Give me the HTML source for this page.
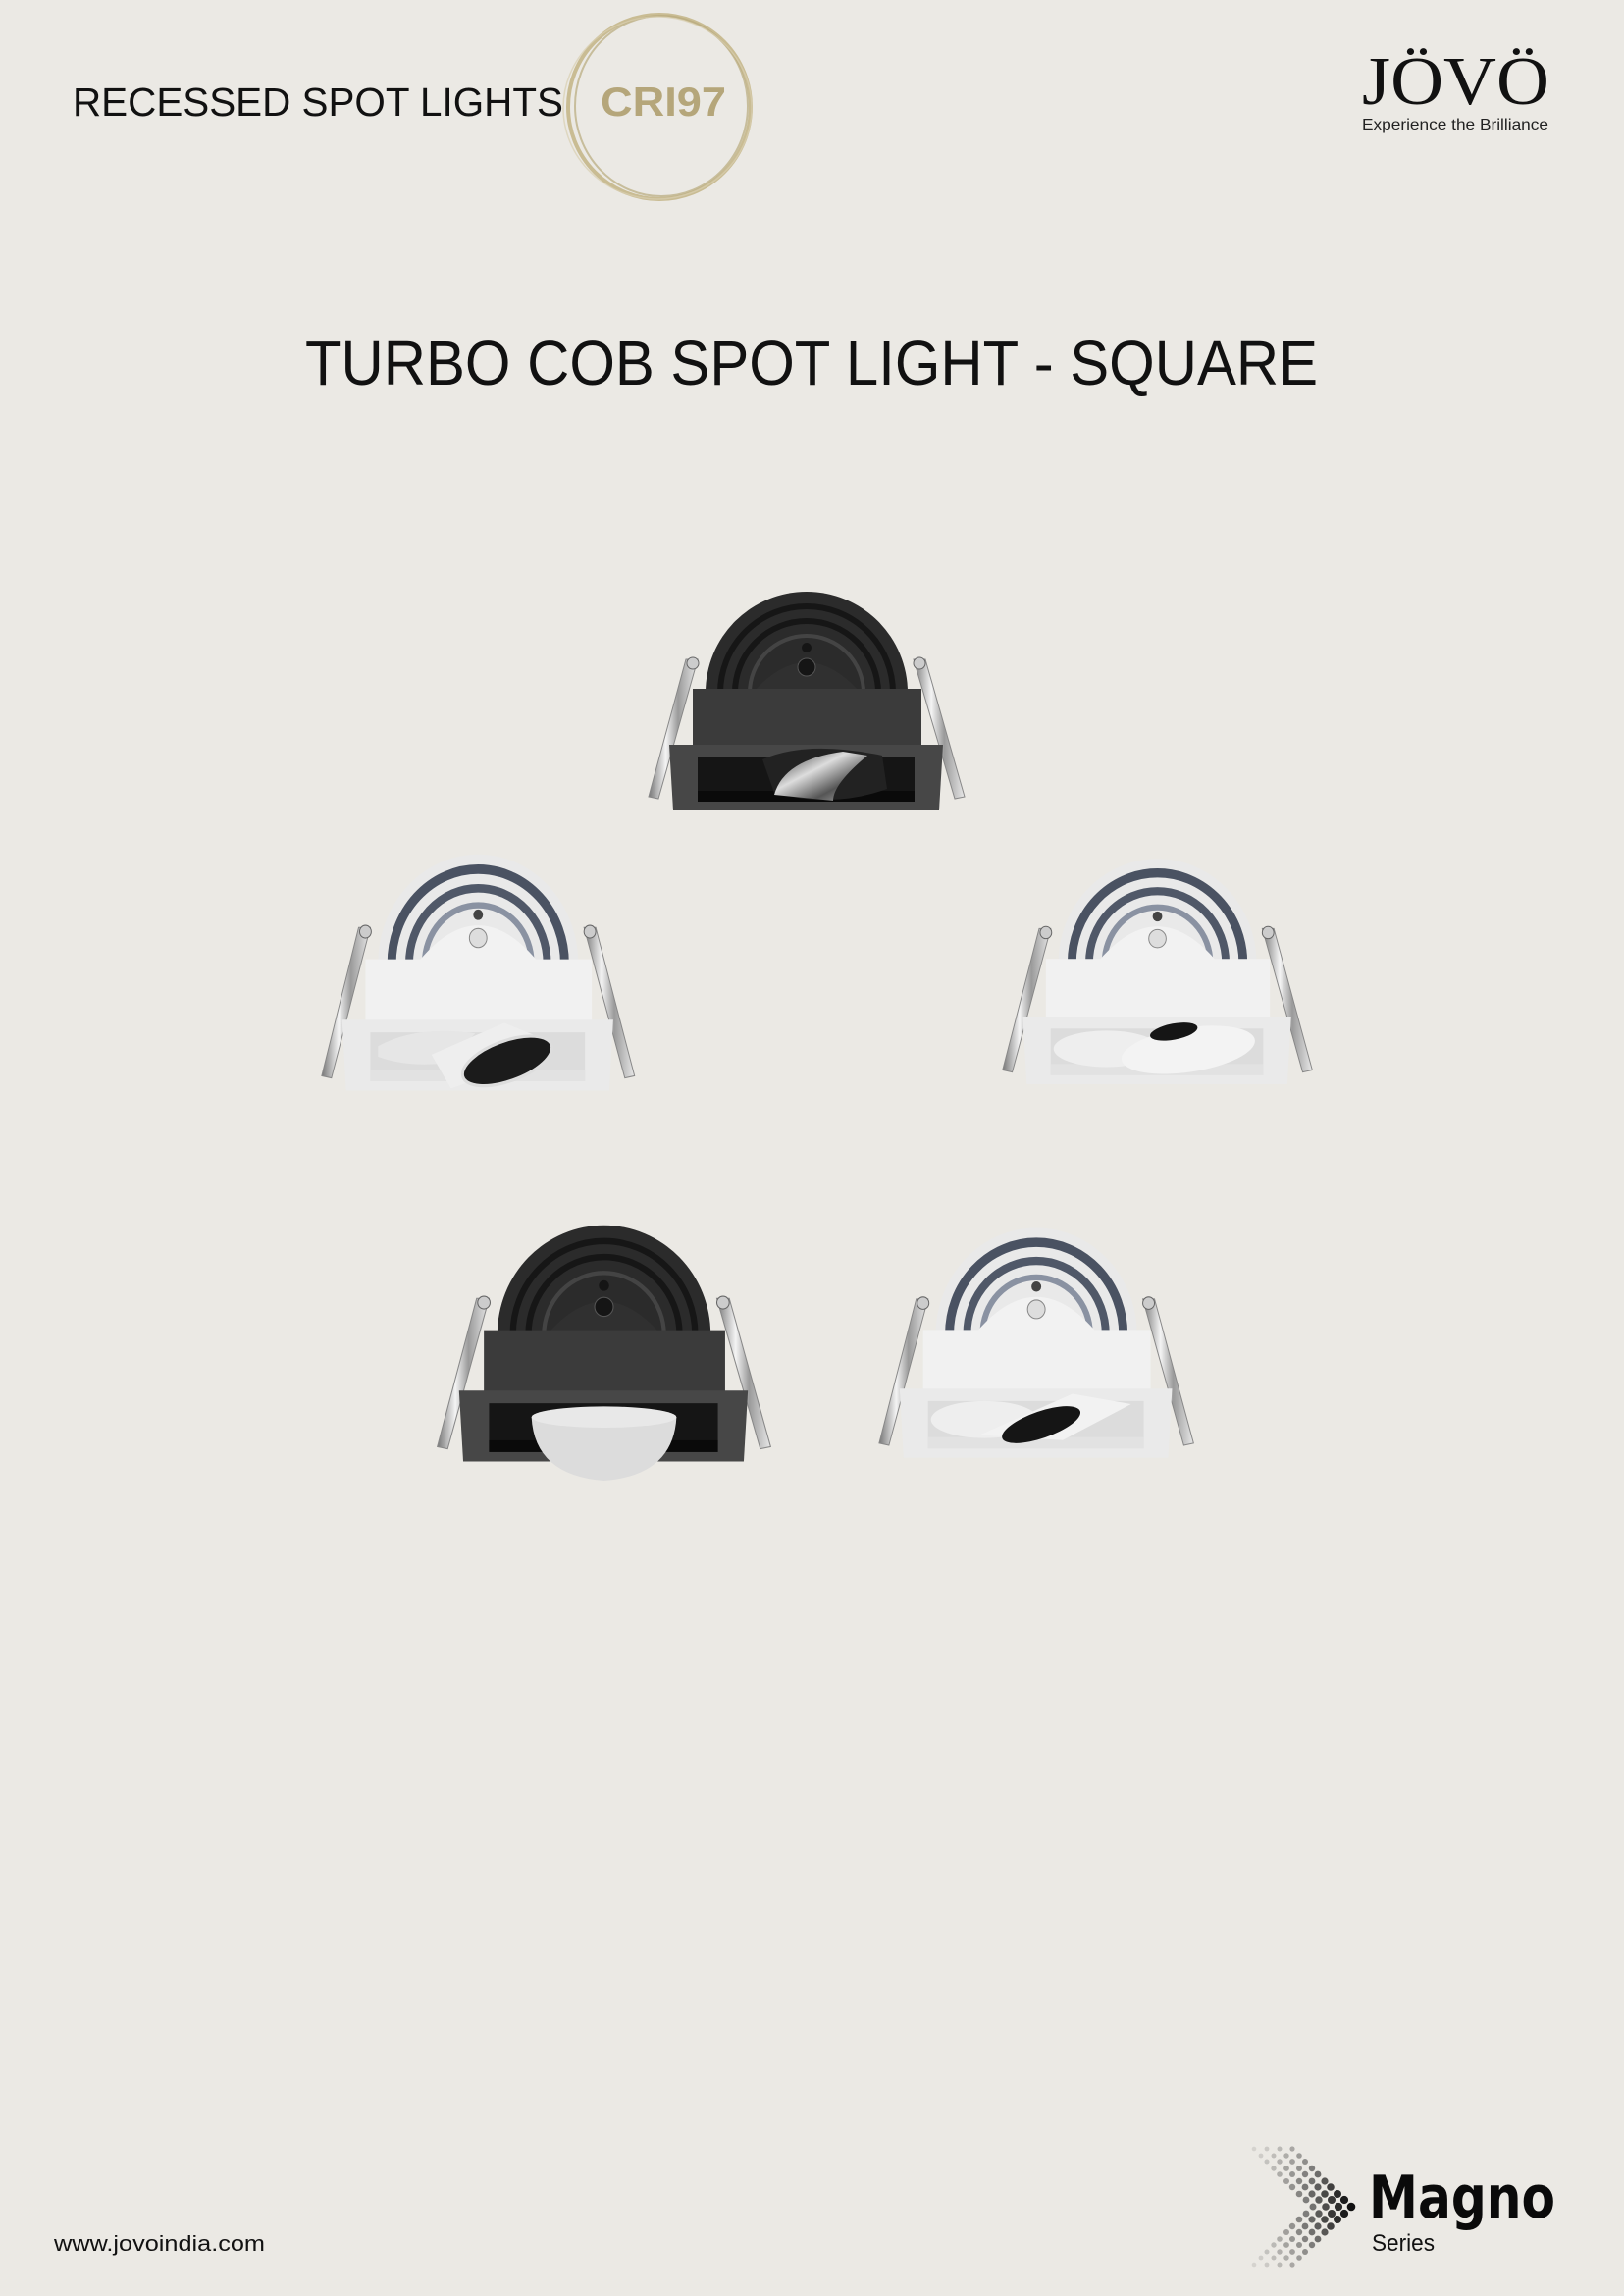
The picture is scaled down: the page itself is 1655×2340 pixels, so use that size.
<!DOCTYPE html>
<html><head><meta charset="utf-8"><style>
html,body{margin:0;padding:0;background:#ebe9e4;}
svg{display:block;}
</style></head><body>
<svg width="1655" height="2340" viewBox="0 0 1655 2340" xmlns="http://www.w3.org/2000/svg">
<defs>
<linearGradient id="chrome" x1="0" x2="1" y1="0" y2="0">
<stop offset="0" stop-color="#777"/><stop offset=".35" stop-color="#f4f4f4"/><stop offset=".6" stop-color="#9a9a9a"/><stop offset="1" stop-color="#e8e8e8"/></linearGradient>
<linearGradient id="steel" x1="0" x2="1" y1="0" y2="1">
<stop offset="0" stop-color="#222"/><stop offset=".4" stop-color="#ddd"/><stop offset=".7" stop-color="#555"/><stop offset="1" stop-color="#bbb"/></linearGradient>
<g id="springs">
<polygon points="50,78 62,78 22,220 12,218" fill="url(#chrome)" stroke="#888" stroke-width="1"/>
<polygon points="282,78 294,78 334,218 324,220" fill="url(#chrome)" stroke="#888" stroke-width="1"/>
<circle cx="57" cy="82" r="6" fill="#ccc" stroke="#666"/>
<circle cx="288" cy="82" r="6" fill="#ccc" stroke="#666"/>
</g>
<g id="blackfix">
<use href="#springs"/>
<path d="M70,112 A103,103 0 0 1 276,112 Z" fill="#2b2b2b"/>
<path d="M85,112 A88,88 0 0 1 261,112" fill="none" stroke="#161616" stroke-width="6"/>
<path d="M100,112 A73,73 0 0 1 246,112" fill="none" stroke="#161616" stroke-width="6"/>
<path d="M115,112 A58,58 0 0 1 231,112" fill="none" stroke="#444" stroke-width="4"/>
<path d="M118,112 Q173,50 228,112 Z" fill="#303030"/>
<circle cx="173" cy="86" r="9" fill="#151515" stroke="#555"/>
<circle cx="173" cy="66" r="5" fill="#151515"/>
<rect x="57" y="108" width="233" height="58" fill="#3b3b3b"/>
<polygon points="33,165 312,165 308,232 37,232" fill="#474747"/>
<rect x="62" y="177" width="221" height="46" fill="#151515"/>
<rect x="62" y="212" width="221" height="11" fill="#0a0a0a"/>
</g>
<g id="whitefix">
<use href="#springs"/>
<path d="M70,112 A103,103 0 0 1 276,112 Z" fill="#e9e9e9"/>
<path d="M84,112 A89,89 0 0 1 262,112" fill="none" stroke="#4a5262" stroke-width="9"/>
<path d="M102,112 A71,71 0 0 1 244,112" fill="none" stroke="#505868" stroke-width="8"/>
<path d="M118,112 A55,55 0 0 1 228,112" fill="none" stroke="#8a92a2" stroke-width="6"/>
<path d="M110,112 Q173,40 236,112 Z" fill="#f2f2f2"/>
<circle cx="173" cy="88" r="9" fill="#ddd" stroke="#888"/>
<circle cx="173" cy="66" r="5" fill="#444"/>
<rect x="57" y="108" width="233" height="58" fill="#f1f1f1"/>
<polygon points="33,165 312,165 308,232 37,232" fill="#eaeaea"/>
<rect x="62" y="177" width="221" height="46" fill="#dcdcdc"/>
<rect x="62" y="212" width="221" height="11" fill="#e2e2e2"/>
</g>
</defs>

<text x="74" y="118" font-family="Liberation Sans, sans-serif" font-size="41" fill="#111" textLength="500" lengthAdjust="spacingAndGlyphs">RECESSED SPOT LIGHTS</text>
<ellipse cx="672" cy="109" rx="93" ry="94" fill="none" stroke="#c9bc93" stroke-width="4"/>
<ellipse cx="674" cy="108" rx="88" ry="92" fill="none" stroke="#b8aa7c" stroke-width="2" opacity=".7"/>
<ellipse cx="670" cy="110" rx="96" ry="93" fill="none" stroke="#d8cfb0" stroke-width="1.5" opacity=".7"/>
<text x="612" y="118" font-family="Liberation Sans, sans-serif" font-weight="bold" font-size="42" fill="#b5a67a" textLength="128" lengthAdjust="spacingAndGlyphs">CRI97</text>

<text x="1388" y="106" font-family="Liberation Serif, serif" font-size="70" fill="#111" textLength="191" lengthAdjust="spacingAndGlyphs">JÖVÖ</text>
<text x="1388" y="132" font-family="Liberation Sans, sans-serif" font-size="16" fill="#222" textLength="190" lengthAdjust="spacingAndGlyphs">Experience the Brilliance</text>

<text x="311" y="392" font-family="Liberation Sans, sans-serif" font-size="64" fill="#111" textLength="1032" lengthAdjust="spacingAndGlyphs">TURBO COB SPOT LIGHT - SQUARE</text>

<g transform="translate(649,594)">
<use href="#blackfix"/>
<path d="M128,180 Q173,160 250,176 L255,210 Q200,230 140,214 Z" fill="#222"/>
<path d="M140,216 Q150,180 210,172 L235,176 Q200,205 200,222 Z" fill="url(#steel)"/>
</g>
<g transform="translate(316,861) scale(0.99,1.08)">
<use href="#whitefix"/>
<path d="M70,190 Q110,170 170,178 L140,206 Q100,210 70,200 Z" fill="#e6e6e6"/>
<path d="M125,198 L200,168 L245,185 L190,215 L145,230 Z" fill="#eeeeee"/>
<ellipse cx="203" cy="204" rx="48" ry="19" transform="rotate(-18 203 204)" fill="#1b1b1b" stroke="#ddd" stroke-width="3"/>
</g>
<g transform="translate(1010,866) scale(0.98,1.03)">
<use href="#whitefix"/>
<ellipse cx="120" cy="197" rx="55" ry="18" fill="#eeeeee"/>
<ellipse cx="205" cy="198" rx="70" ry="22" transform="rotate(-8 205 198)" fill="#f3f3f3"/>
<ellipse cx="190" cy="180" rx="25" ry="8" transform="rotate(-10 190 180)" fill="#151515"/>
</g>
<g transform="translate(433,1239) scale(1.055,1.08)">
<use href="#blackfix"/>
<path d="M103,190 L243,190 Q240,245 173,250 Q106,245 103,190 Z" fill="#dcdcdc"/>
<ellipse cx="173" cy="190" rx="70" ry="10" fill="#e8e8e8"/>
</g>
<g transform="translate(884,1242) scale(0.995,1.05)">
<use href="#whitefix"/>
<ellipse cx="120" cy="195" rx="55" ry="18" fill="#eeeeee"/>
<path d="M115,210 L210,170 L270,180 L200,215 Z" fill="#f2f2f2"/>
<ellipse cx="178" cy="200" rx="42" ry="13" transform="rotate(-18 178 200)" fill="#151515"/>
</g>

<text x="55" y="2294" font-family="Liberation Sans, sans-serif" font-size="22" fill="#111" textLength="215" lengthAdjust="spacingAndGlyphs">www.jovoindia.com</text>

<g fill="#111">
<circle cx="1317" cy="2190" r="2.6" opacity=".3"/><circle cx="1304" cy="2190" r="2.5" opacity=".22"/><circle cx="1291" cy="2190" r="2.4" opacity=".15"/><circle cx="1278" cy="2190" r="2.3" opacity=".1"/>
<circle cx="1324" cy="2197" r="2.8" opacity=".36"/><circle cx="1311" cy="2197" r="2.7" opacity=".28"/><circle cx="1298" cy="2197" r="2.5" opacity=".2"/><circle cx="1285" cy="2197" r="2.4" opacity=".13"/>
<circle cx="1330" cy="2203" r="3" opacity=".42"/><circle cx="1317" cy="2203" r="2.9" opacity=".34"/><circle cx="1304" cy="2203" r="2.7" opacity=".26"/><circle cx="1291" cy="2203" r="2.5" opacity=".18"/>
<circle cx="1337" cy="2210" r="3.2" opacity=".5"/><circle cx="1324" cy="2210" r="3" opacity=".4"/><circle cx="1311" cy="2210" r="2.9" opacity=".32"/><circle cx="1298" cy="2210" r="2.7" opacity=".22"/>
<circle cx="1343" cy="2216" r="3.4" opacity=".58"/><circle cx="1330" cy="2216" r="3.2" opacity=".48"/><circle cx="1317" cy="2216" r="3" opacity=".38"/><circle cx="1304" cy="2216" r="2.8" opacity=".28"/>
<circle cx="1350" cy="2223" r="3.6" opacity=".68"/><circle cx="1337" cy="2223" r="3.4" opacity=".56"/><circle cx="1324" cy="2223" r="3.2" opacity=".45"/><circle cx="1311" cy="2223" r="3" opacity=".34"/>
<circle cx="1356" cy="2229" r="3.8" opacity=".78"/><circle cx="1343" cy="2229" r="3.6" opacity=".65"/><circle cx="1330" cy="2229" r="3.4" opacity=".52"/><circle cx="1317" cy="2229" r="3.2" opacity=".4"/>
<circle cx="1363" cy="2236" r="4" opacity=".88"/><circle cx="1350" cy="2236" r="3.8" opacity=".75"/><circle cx="1337" cy="2236" r="3.6" opacity=".6"/><circle cx="1324" cy="2236" r="3.3" opacity=".46"/>
<circle cx="1370" cy="2242" r="4.1" opacity=".95"/><circle cx="1357" cy="2242" r="4" opacity=".82"/><circle cx="1344" cy="2242" r="3.7" opacity=".66"/><circle cx="1331" cy="2242" r="3.4" opacity=".5"/>
<circle cx="1377" cy="2249" r="4.3"/><circle cx="1364" cy="2249" r="4.1" opacity=".88"/><circle cx="1351" cy="2249" r="3.8" opacity=".72"/><circle cx="1338" cy="2249" r="3.5" opacity=".55"/>
<circle cx="1370" cy="2256" r="4.1" opacity=".95"/><circle cx="1357" cy="2256" r="4" opacity=".82"/><circle cx="1344" cy="2256" r="3.7" opacity=".66"/><circle cx="1331" cy="2256" r="3.4" opacity=".5"/>
<circle cx="1363" cy="2262" r="4" opacity=".88"/><circle cx="1350" cy="2262" r="3.8" opacity=".75"/><circle cx="1337" cy="2262" r="3.6" opacity=".6"/><circle cx="1324" cy="2262" r="3.3" opacity=".46"/>
<circle cx="1356" cy="2269" r="3.8" opacity=".78"/><circle cx="1343" cy="2269" r="3.6" opacity=".65"/><circle cx="1330" cy="2269" r="3.4" opacity=".52"/><circle cx="1317" cy="2269" r="3.2" opacity=".4"/>
<circle cx="1350" cy="2275" r="3.6" opacity=".68"/><circle cx="1337" cy="2275" r="3.4" opacity=".56"/><circle cx="1324" cy="2275" r="3.2" opacity=".45"/><circle cx="1311" cy="2275" r="3" opacity=".34"/>
<circle cx="1343" cy="2282" r="3.4" opacity=".58"/><circle cx="1330" cy="2282" r="3.2" opacity=".48"/><circle cx="1317" cy="2282" r="3" opacity=".38"/><circle cx="1304" cy="2282" r="2.8" opacity=".28"/>
<circle cx="1337" cy="2288" r="3.2" opacity=".5"/><circle cx="1324" cy="2288" r="3" opacity=".4"/><circle cx="1311" cy="2288" r="2.9" opacity=".32"/><circle cx="1298" cy="2288" r="2.7" opacity=".22"/>
<circle cx="1330" cy="2295" r="3" opacity=".42"/><circle cx="1317" cy="2295" r="2.9" opacity=".34"/><circle cx="1304" cy="2295" r="2.7" opacity=".26"/><circle cx="1291" cy="2295" r="2.5" opacity=".18"/>
<circle cx="1324" cy="2301" r="2.8" opacity=".36"/><circle cx="1311" cy="2301" r="2.7" opacity=".28"/><circle cx="1298" cy="2301" r="2.5" opacity=".2"/><circle cx="1285" cy="2301" r="2.4" opacity=".13"/>
<circle cx="1317" cy="2308" r="2.6" opacity=".3"/><circle cx="1304" cy="2308" r="2.5" opacity=".22"/><circle cx="1291" cy="2308" r="2.4" opacity=".15"/><circle cx="1278" cy="2308" r="2.3" opacity=".1"/>
</g>
<text x="1395" y="2260" font-family="DejaVu Sans, sans-serif" font-weight="bold" font-size="60" fill="#0a0a0a" textLength="190" lengthAdjust="spacingAndGlyphs">Magno</text>
<text x="1398" y="2294" font-family="Liberation Sans, sans-serif" font-size="24" fill="#111" textLength="64" lengthAdjust="spacingAndGlyphs">Series</text>
</svg>
</body></html>
